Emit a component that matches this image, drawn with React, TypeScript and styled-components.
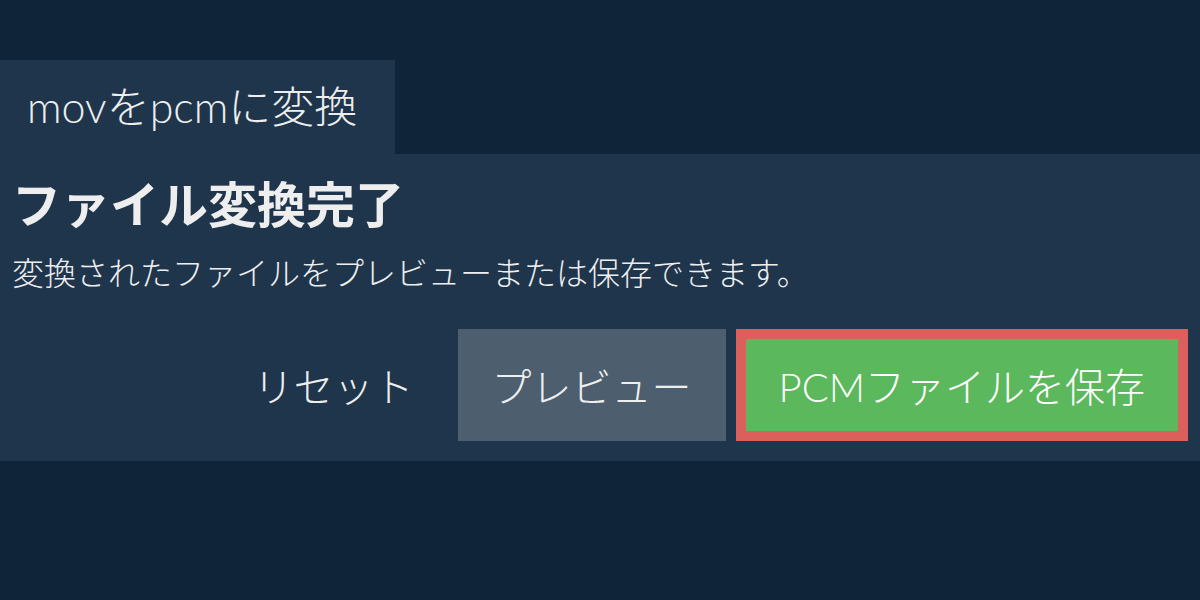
import { FC } from "react"
import styled, { createGlobalStyle } from "styled-components"

const GlobalStyle = createGlobalStyle`
  html, body {
    margin: 0;
    padding: 0;
    background: #0f2339;
  }
  body {
    font-family: Lato, "Noto Sans CJK JP", sans-serif;
    color: #eeeeee;
  }
`

const App: FC = () => {
  return (
    <>
      <GlobalStyle />
      <Page>
        <Tab>movをpcmに変換</Tab>
        <Panel>
          <Title>ファイル変換完了</Title>
          <Message>変換されたファイルをプレビューまたは保存できます。</Message>
          <Actions>
            <Button variant="plain">リセット</Button>
            <Button variant="gray">プレビュー</Button>
            <Button variant="primary">PCMファイルを保存</Button>
          </Actions>
        </Panel>
      </Page>
    </>
  )
}
export default App

const Page = styled.div`
  padding-top: 60px;
  width: 1200px;
`

const Tab = styled.div`
  display: inline-block;
  height: 94px;
  line-height: 94px;
  padding: 0 38px 0 27px;
  background: #1f354c;
  font-size: 43px;
  font-weight: 300;
  vertical-align: top;
`

const Panel = styled.div`
  background: #1f354c;
  padding: 20px 12px 20px;
`

const Title = styled.h1`
  margin: 0;
  font-size: 49px;
  line-height: 60px;
  font-weight: 700;
`

const Message = styled.p`
  margin: 19px 0 0;
  font-size: 32px;
  line-height: 40px;
  font-weight: 300;
`

const Actions = styled.div`
  margin-top: 36px;
  display: flex;
  justify-content: flex-end;
  gap: 10px;
`

type Variant = "plain" | "gray" | "primary"

const Button = styled.button<{ variant: Variant }>`
  box-sizing: border-box;
  height: 112px;
  padding: 0 ${(p) => (p.variant === "primary" ? "33px" : "34px")};
  font-family: Lato, "Noto Sans CJK JP", sans-serif;
  font-size: 40px;
  font-weight: 300;
  cursor: pointer;
  border: ${(p) => (p.variant === "primary" ? "10px solid #db605c" : "none")};
  background: ${(p) =>
    p.variant === "primary" ? "#5cb85c" : p.variant === "gray" ? "#4d5e6e" : "transparent"};
  color: ${(p) => (p.variant === "primary" ? "#ffffff" : "#eeeeee")};
`
